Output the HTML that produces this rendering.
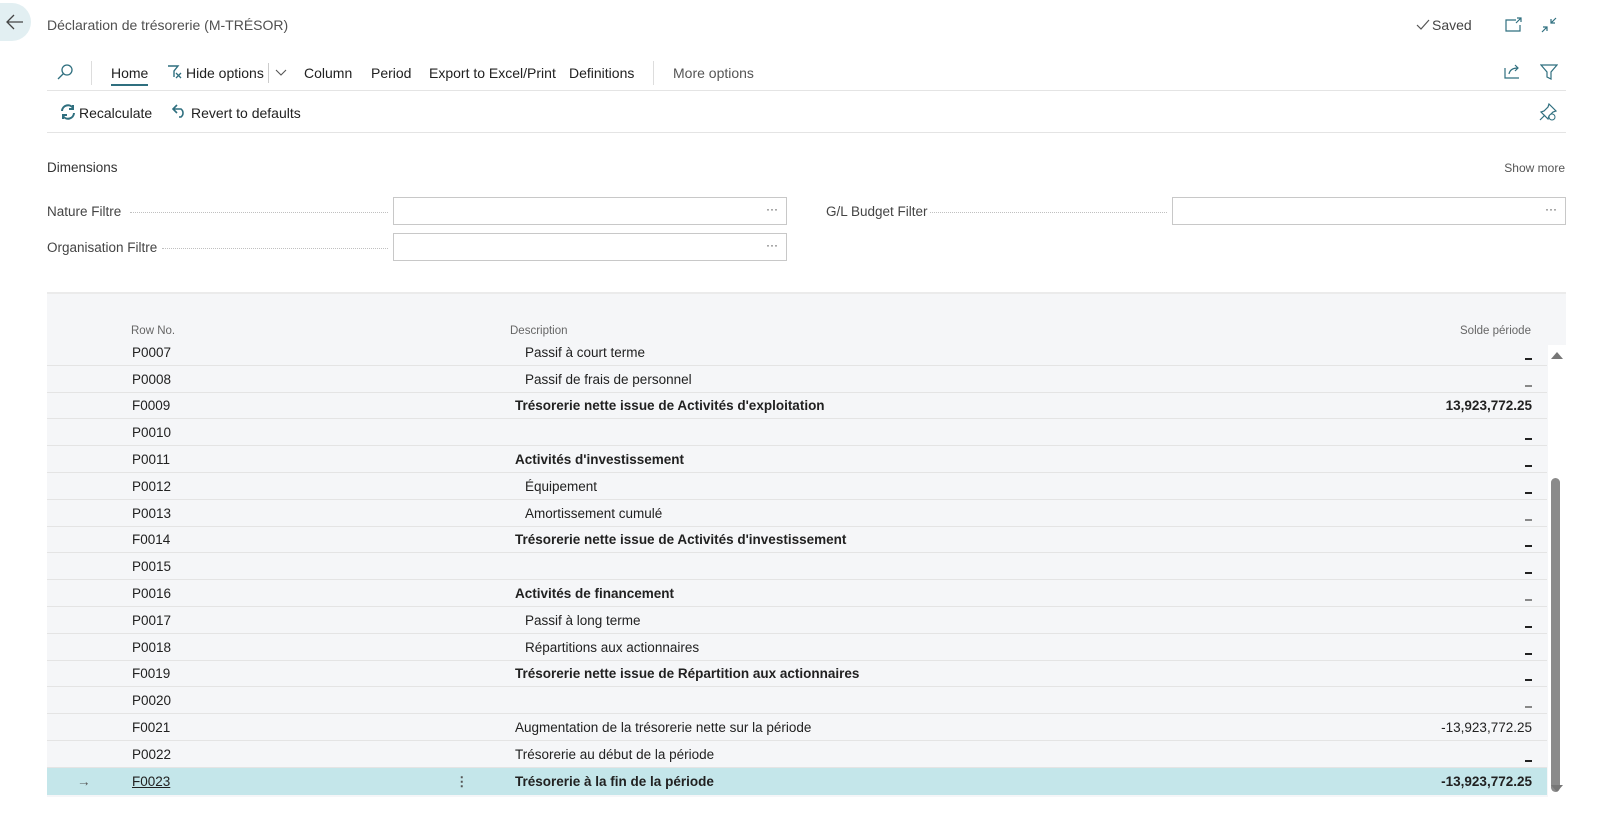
<!DOCTYPE html>
<html><head><meta charset="utf-8"><style>
*{box-sizing:border-box;margin:0;padding:0}
body{width:1600px;height:821px;background:#fff;font-family:"Liberation Sans",sans-serif;color:#212121;position:relative;overflow:hidden;font-size:13.5px}
.a{position:absolute;white-space:nowrap}
.ic{position:absolute}
.grid{position:absolute;left:47px;top:292px;width:1519px;height:505px;background:#f5f6f8;border-top:2px solid #ebebeb}
.row{position:absolute;left:47px;width:1500px;height:27px;border-bottom:1px solid #e4e4e4}
.row span{position:absolute;top:6px;white-space:nowrap}
.b{font-weight:bold}
.dash{position:absolute;right:15px;top:19px;width:7px;height:1.5px;background:#222}
.inp{position:absolute;height:28px;border:1px solid #c8c8c8;background:#fff}
.inp i{position:absolute;right:8px;top:4px;font-style:normal;font-size:12px;color:#444}
.dots{position:absolute;border-bottom:1px dotted #c0c0c0;height:1px}
</style></head><body>
<div class="ic" style="left:0;top:3px;width:31px;height:38px;border-radius:0 19px 19px 0;background:#e2eff2"></div>
<svg class="ic" style="left:6px;top:14px" width="18" height="16" viewBox="0 0 18 16"><path d="M17 8H2M8 1L1 8l7 7" fill="none" stroke="#444" stroke-width="1.3"/></svg>
<div class="a" style="left:47px;top:17px;font-size:14px;color:#505050">Déclaration de trésorerie (M-TRÉSOR)</div>
<svg class="ic" style="left:1416px;top:19px" width="14" height="12"><path d="M1 6l4 4 8-9" fill="none" stroke="#555" stroke-width="1.2"/></svg>
<div class="a" style="left:1432px;top:17px;font-size:14px;color:#444">Saved</div>
<svg class="ic" style="left:1505px;top:17px" width="18" height="16"><path d="M11 3H1v11h14V8M12 1h4v4M16 1l-5 5" fill="none" stroke="#2f6f7f" stroke-width="1.2"/></svg>
<svg class="ic" style="left:1540px;top:17px" width="18" height="16"><path d="M16 1l-5 5M11 2v4h4M2 15l5-5M3 10h4v4" fill="none" stroke="#2f6f7f" stroke-width="1.2"/></svg>

<svg class="ic" style="left:56px;top:63px" width="18" height="18"><circle cx="11" cy="7" r="5" fill="none" stroke="#2f6f7f" stroke-width="1.3"/><path d="M7.5 10.5L2 16" stroke="#2f6f7f" stroke-width="1.3"/></svg>
<div class="ic" style="left:91px;top:61px;width:1px;height:24px;background:#ddd"></div>
<div class="a" style="left:111px;top:65px;font-size:14px">Home</div>
<div class="ic" style="left:111px;top:84px;width:37px;height:2px;background:#2f6f7f"></div>
<svg class="ic" style="left:167px;top:64px" width="16" height="16"><path d="M1 2h10L7 7v6" fill="none" stroke="#2f6f7f" stroke-width="1.4"/><path d="M9 9l5 5M14 9l-5 5" stroke="#2f6f7f" stroke-width="1.3"/></svg>
<div class="a" style="left:186px;top:65px;font-size:14px">Hide options</div>
<div class="ic" style="left:268px;top:63px;width:1px;height:20px;background:#ccc"></div>
<svg class="ic" style="left:275px;top:69px" width="12" height="8"><path d="M1 1l5 5 5-5" fill="none" stroke="#555" stroke-width="1.1"/></svg>
<div class="a" style="left:304px;top:65px;font-size:14px">Column</div>
<div class="a" style="left:371px;top:65px;font-size:14px">Period</div>
<div class="a" style="left:429px;top:65px;font-size:14px">Export to Excel/Print</div>
<div class="a" style="left:569px;top:65px;font-size:14px">Definitions</div>
<div class="ic" style="left:653px;top:61px;width:1px;height:24px;background:#ddd"></div>
<div class="a" style="left:673px;top:65px;font-size:14px;color:#555">More options</div>
<svg class="ic" style="left:1504px;top:63px" width="18" height="16"><path d="M1 5v10h14M5 11c1-5 5-6 9-6M11 2l3 3-3 3" fill="none" stroke="#2f6f7f" stroke-width="1.2"/></svg>
<svg class="ic" style="left:1540px;top:64px" width="18" height="16"><path d="M1 1h16l-6 7v7l-4-2V8z" fill="none" stroke="#2f6f7f" stroke-width="1.2"/></svg>
<div class="ic" style="left:47px;top:90px;width:1519px;height:1px;background:#e4e4e4"></div>

<svg class="ic" style="left:60px;top:104px" width="16" height="16"><path d="M2 7a6 6 0 0 1 11-3M14 9a6 6 0 0 1-11 3" fill="none" stroke="#2f6f7f" stroke-width="2"/><path d="M13 1v4H9M3 15v-4h4" fill="none" stroke="#2f6f7f" stroke-width="2"/></svg>
<div class="a" style="left:79px;top:105px;font-size:14px">Recalculate</div>
<svg class="ic" style="left:172px;top:104px" width="16" height="14"><path d="M5 1L1 5l4 4M1 5h8a5 5 0 0 1 0 8H7" fill="none" stroke="#2f6f7f" stroke-width="1.6"/></svg>
<div class="a" style="left:191px;top:105px;font-size:14px">Revert to defaults</div>
<svg class="ic" style="left:1539px;top:103px" width="18" height="18"><path d="M10 1l7 7-3 1-4 4-1 3-7-7 3-1 4-4zM6 12l-5 5" fill="none" stroke="#2f6f7f" stroke-width="1.2"/><circle cx="13" cy="14" r="3" fill="#fff" stroke="#2f6f7f"/></svg>
<div class="ic" style="left:47px;top:132px;width:1519px;height:1px;background:#e4e4e4"></div>

<div class="a" style="left:47px;top:160px;font-size:13.5px;color:#333">Dimensions</div>
<div class="a" style="right:35px;top:161px;font-size:12px;color:#555">Show more</div>
<div class="a" style="left:47px;top:204px;color:#444">Nature Filtre</div>
<div class="dots" style="left:130px;top:212px;width:258px"></div>
<div class="inp" style="left:393px;top:197px;width:394px"><i>···</i></div>
<div class="a" style="left:47px;top:240px;color:#444">Organisation Filtre</div>
<div class="dots" style="left:162px;top:248px;width:226px"></div>
<div class="inp" style="left:393px;top:233px;width:394px"><i>···</i></div>
<div class="a" style="left:826px;top:204px;color:#444">G/L Budget Filter</div>
<div class="dots" style="left:930px;top:212px;width:237px"></div>
<div class="inp" style="left:1172px;top:197px;width:394px"><i>···</i></div>

<div class="grid"></div>
<div class="a" style="left:131px;top:325px;font-size:11.5px;color:#666">Row No.</div>
<div class="a" style="left:510px;top:325px;font-size:11.5px;color:#666">Description</div>
<div class="a" style="left:1460px;top:325px;font-size:11.5px;color:#666">Solde période</div>

<div class="row" style="top:339px"><span style="left:85px">P0007</span><span style="left:478px">Passif à court terme</span><div class="dash"></div></div>
<div class="row" style="top:366px"><span style="left:85px">P0008</span><span style="left:478px">Passif de frais de personnel</span><div class="dash" style="background:#888"></div></div>
<div class="row" style="top:392px"><span style="left:85px">F0009</span><span class="b" style="left:468px">Trésorerie nette issue de Activités d'exploitation</span><span class="b" style="right:15px">13,923,772.25</span></div>
<div class="row" style="top:419px"><span style="left:85px">P0010</span><div class="dash"></div></div>
<div class="row" style="top:446px"><span style="left:85px">P0011</span><span class="b" style="left:468px">Activités d'investissement</span><div class="dash"></div></div>
<div class="row" style="top:473px"><span style="left:85px">P0012</span><span style="left:478px">Équipement</span><div class="dash"></div></div>
<div class="row" style="top:500px"><span style="left:85px">P0013</span><span style="left:478px">Amortissement cumulé</span><div class="dash" style="background:#888"></div></div>
<div class="row" style="top:526px"><span style="left:85px">F0014</span><span class="b" style="left:468px">Trésorerie nette issue de Activités d'investissement</span><div class="dash"></div></div>
<div class="row" style="top:553px"><span style="left:85px">P0015</span><div class="dash"></div></div>
<div class="row" style="top:580px"><span style="left:85px">P0016</span><span class="b" style="left:468px">Activités de financement</span><div class="dash" style="background:#888"></div></div>
<div class="row" style="top:607px"><span style="left:85px">P0017</span><span style="left:478px">Passif à long terme</span><div class="dash"></div></div>
<div class="row" style="top:634px"><span style="left:85px">P0018</span><span style="left:478px">Répartitions aux actionnaires</span><div class="dash"></div></div>
<div class="row" style="top:660px"><span style="left:85px">F0019</span><span class="b" style="left:468px">Trésorerie nette issue de Répartition aux actionnaires</span><div class="dash"></div></div>
<div class="row" style="top:687px"><span style="left:85px">P0020</span><div class="dash" style="background:#888"></div></div>
<div class="row" style="top:714px"><span style="left:85px">F0021</span><span style="left:468px">Augmentation de la trésorerie nette sur la période</span><span style="right:15px">-13,923,772.25</span></div>
<div class="row" style="top:741px"><span style="left:85px">P0022</span><span style="left:468px">Trésorerie au début de la période</span><div class="dash"></div></div>
<div class="row" style="top:768px;background:#c4e6ea;border-bottom:none"><span style="left:30px;color:#555">→</span><span style="left:85px;text-decoration:underline">F0023</span><span style="left:408px;font-weight:bold;color:#555">⋮</span><span class="b" style="left:468px">Trésorerie à la fin de la période</span><span class="b" style="right:15px">-13,923,772.25</span></div>

<div class="ic" style="left:1548px;top:345px;width:18px;height:452px;background:#fff"></div>
<svg class="ic" style="left:1550px;top:350px" width="14" height="10"><path d="M1 9L7 2l6 7z" fill="#777"/></svg>
<div class="ic" style="left:1551px;top:478px;width:9px;height:314px;border-radius:5px;background:#8a8a8a"></div>
<svg class="ic" style="left:1550px;top:784px" width="14" height="10"><path d="M1 1l6 7 6-7z" fill="#777"/></svg>
</body></html>
